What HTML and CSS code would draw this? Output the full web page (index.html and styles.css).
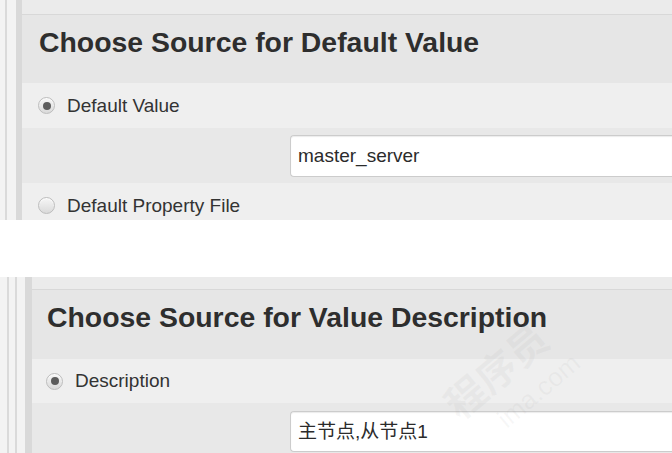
FILE: index.html
```html
<!DOCTYPE html>
<html>
<head>
<meta charset="utf-8">
<link rel="stylesheet" href="styles.css">
</head>
<body>
<div class="panel panel-top">
  <div class="stripes">
    <div class="s-light w5"></div><div class="s-line w2"></div><div class="s-light w9"></div><div class="s-band w6"></div>
  </div>
  <div class="content">
    <div class="topstrip h14"></div>
    <div class="heading-row"><h2 class="heading pad17">Choose Source for Default Value</h2></div>
    <div class="radio-row pad16 h45"><span class="radio checked"></span><span class="label">Default Value</span></div>
    <div class="input-row in-top"><div class="input">master_server</div></div>
    <div class="radio-row pad16 h45"><span class="radio"></span><span class="label">Default Property File</span></div>
  </div>
</div>

<div class="gap"></div>

<div class="panel panel-bottom">
  <div class="stripes">
    <div class="s-light w7"></div><div class="s-line w2"></div><div class="s-light w6"></div><div class="s-line w2"></div><div class="s-light w8"></div><div class="s-band w7"></div>
  </div>
  <div class="content">
    <div class="topstrip h12"></div>
    <div class="heading-row"><h2 class="heading pad15">Choose Source for Value Description</h2></div>
    <div class="radio-row pad14 h44"><span class="radio checked"></span><span class="label">Description</span></div>
    <div class="input-row in-bottom"><div class="input">主节点,从节点1</div></div>
  </div>
  <div class="watermark">
    <span class="wm-main">程序员</span>
    <span class="wm-sub">ima.com</span>
  </div>
</div>
</body>
</html>
```
FILE: styles.css
```css
* { box-sizing: border-box; }
html, body { margin: 0; padding: 0; background: #ffffff; }
body {
  font-family: "Liberation Sans", Arial, "Noto Sans CJK SC", sans-serif;
  color: #333333;
  width: 672px;
  overflow: hidden;
}
.panel {
  display: flex;
  overflow: hidden;
  position: relative;
}
.panel-top { height: 220px; }
.panel-bottom { height: 176px; }
.gap { height: 57px; background: #ffffff; }

.stripes { display: flex; flex: none; }
.s-light { background: #f3f3f3; }
.s-line { background: #dadada; }
.s-band { background: #d9d9d9; }
.w2 { width: 2px; } .w5 { width: 5px; } .w6 { width: 6px; } .w7 { width: 7px; } .w8 { width: 8px; } .w9 { width: 9px; }

.content { flex: 1; display: flex; flex-direction: column; min-width: 0; }
.topstrip { background: #ebebeb; border-bottom: 1px solid #d8d8d8; flex: none; }
.h14 { height: 15px; }
.h12 { height: 13px; }

.heading-row { background: #e6e6e6; height: 69px; flex: none; }
.panel-top .heading-row { height: 68px; }
.heading {
  margin: 0;
  padding-top: 11px;
  font-size: 28.4px;
  line-height: 32px;
  font-weight: bold;
  color: #2e2e2e;
  white-space: nowrap;
}
.pad17 { padding-left: 17px; }
.pad16 { padding-left: 16px; }
.pad15 { padding-left: 15px; }
.pad14 { padding-left: 14px; }

.radio-row {
  display: flex;
  align-items: center;
  background: #efefef;
  flex: none;
}
.h45 { height: 45px; }
.h44 { height: 44px; }
.radio {
  width: 17px;
  height: 17px;
  border-radius: 50%;
  border: 1px solid #bdbdbd;
  background: linear-gradient(#f6f6f6, #dadada);
  box-shadow: inset 0 1px 1px rgba(255,255,255,0.8);
  display: flex;
  align-items: center;
  justify-content: center;
  flex: none;
}
.radio.checked::after {
  content: "";
  width: 8px;
  height: 8px;
  border-radius: 50%;
  background: #5c5c5c;
}
.label {
  margin-left: 12px;
  font-size: 19px;
  color: #333333;
  white-space: nowrap;
}

.input-row {
  background: #e8e8e8;
  padding-left: 268px;
  flex: none;
}
.panel-bottom .input-row { padding-left: 258px; }
.in-top { height: 55px; padding-top: 7px; }
.in-bottom { height: 60px; padding-top: 8px; }
.input {
  height: 42px;
  background: #ffffff;
  border: 1px solid #cccccc;
  border-right: none;
  border-radius: 4px 0 0 4px;
  box-shadow: inset 0 1px 1px rgba(0,0,0,0.08);
  font-size: 19px;
  line-height: 40px;
  padding-left: 7px;
  color: #2b2b2b;
  white-space: nowrap;
}
.panel-bottom .input { height: 41px; line-height: 39px; }

.watermark {
  position: absolute;
  left: 420px;
  top: 60px;
  width: 170px;
  transform: rotate(-40deg);
  pointer-events: none;
  display: flex;
  flex-direction: column;
  align-items: center;
}
.wm-main {
  font-size: 40px;
  font-weight: bold;
  color: rgba(160,160,160,0.09);
  font-family: "Noto Sans CJK SC", sans-serif;
  white-space: nowrap;
}
.wm-sub {
  font-size: 26px;
  color: rgba(160,160,160,0.09);
  white-space: nowrap;
  margin-left: 40px;
}
```
